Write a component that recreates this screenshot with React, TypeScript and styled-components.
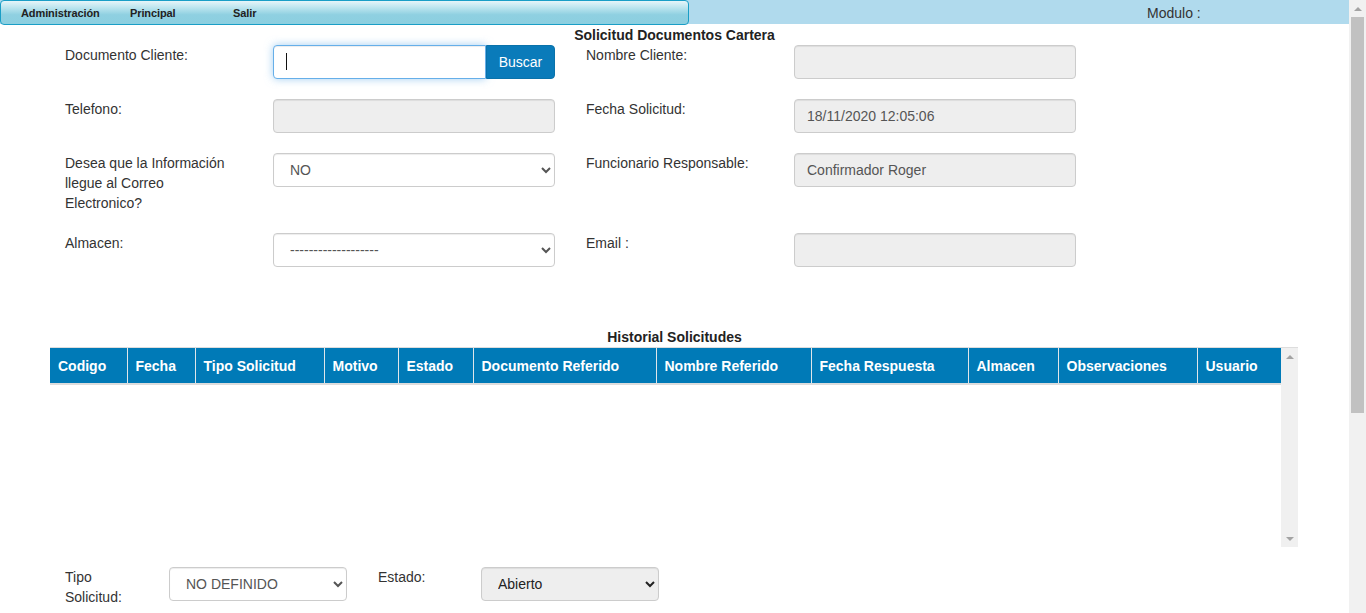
import React from "react";
import styled, { createGlobalStyle } from "styled-components";

const Global = createGlobalStyle`
  html, body { margin: 0; padding: 0; overflow: hidden; background: #fff; }
  body { font-family: "Liberation Sans", Arial, sans-serif; color: #333; }
  * { box-sizing: border-box; }
`;

const Shell = styled.div`
  display: flex;
  width: 100vw;
  height: 100vh;
  overflow: hidden;
`;

const Page = styled.div`
  flex: 1;
  min-width: 0;
  display: flex;
  flex-direction: column;
`;

const PageScroll = styled.div`
  width: 17px;
  height: 100%;
  background: #f1f1f1;
  display: flex;
  flex-direction: column;
  align-items: center;
`;

const ScrollArrow = styled.div<{ $down?: boolean }>`
  width: 17px;
  height: 17px;
  display: flex;
  align-items: center;
  justify-content: center;
  &::before {
    content: "";
    border-left: 4px solid transparent;
    border-right: 4px solid transparent;
    ${(p) => (p.$down ? "border-top: 4px solid #a3a3a3;" : "border-bottom: 4px solid #a3a3a3;")}
  }
`;

const Thumb = styled.div<{ $h: number }>`
  width: 13px;
  height: ${(p) => p.$h}px;
  background: #c1c1c1;
`;

const TopBar = styled.div`
  display: flex;
  align-items: flex-start;
  height: 24px;
  background: #b0daed;
`;

const MenuBox = styled.div`
  width: 689px;
  height: 25px;
  border: 1px solid #1a9ec6;
  border-radius: 4px;
  background: linear-gradient(to bottom, #e6f5f9 0%, #b3e1ec 35%, #8fd0e1 60%, #8ccfe0 100%);
  display: flex;
  align-items: center;
  padding-left: 20px;
`;

const MenuItem = styled.span<{ $w: number }>`
  width: ${(p) => p.$w}px;
  font-size: 11px;
  font-weight: bold;
  color: #222;
  line-height: 22px;
  letter-spacing: -0.1px;
`;

const Modulo = styled.span`
  margin-left: 458px;
  font-size: 14px;
  line-height: 26px;
  color: #333;
`;

const Heading = styled.div<{ $top: number }>`
  margin-top: ${(p) => p.$top}px;
  text-align: center;
  font-weight: bold;
  font-size: 14px;
  line-height: 16px;
  color: #222;
`;

const FormGrid = styled.div`
  margin-top: 2px;
  margin-left: 65px;
  display: grid;
  grid-template-columns: 208px 313px 208px 282px;
  row-gap: 20px;
  align-items: start;
`;

const Label = styled.div<{ $w?: number }>`
  font-size: 14px;
  line-height: 20px;
  color: #333;
  width: ${(p) => (p.$w ? `${p.$w}px` : "auto")};
`;

const InputGroup = styled.div`
  display: flex;
  position: relative;
  width: 282px;
  height: 34px;
`;

const FocusInput = styled.input`
  flex: 1;
  min-width: 0;
  height: 34px;
  border: 1px solid #66afe9;
  border-radius: 4px 0 0 4px;
  box-shadow: inset 0 1px 1px rgba(0, 0, 0, 0.075), 0 0 8px rgba(102, 175, 233, 0.6);
  padding: 6px 12px;
  font-family: inherit;
  font-size: 14px;
  color: #555;
  outline: none;
`;

const Caret = styled.span`
  position: absolute;
  left: 13px;
  top: 8px;
  width: 1px;
  height: 17px;
  background: #111;
`;

const SearchButton = styled.button`
  width: 69px;
  height: 34px;
  border: 1px solid #0a72aa;
  border-radius: 0 4px 4px 0;
  background: #0a7bba;
  color: #fff;
  font-family: inherit;
  font-size: 14px;
  padding: 0;
`;

const ReadField = styled.input`
  width: 282px;
  height: 34px;
  border: 1px solid #ccc;
  border-radius: 4px;
  background: #eee;
  padding: 6px 12px;
  font-family: inherit;
  font-size: 14px;
  color: #555;
  box-shadow: inset 0 1px 1px rgba(0, 0, 0, 0.075);
`;

const Select = styled.select<{ $w: number; $gray?: boolean }>`
  width: ${(p) => p.$w}px;
  height: 34px;
  border: 1px solid #ccc;
  border-radius: 4px;
  background-color: ${(p) => (p.$gray ? "#eee" : "#fff")};
  padding: 6px 12px;
  font-family: inherit;
  font-size: 14px;
  color: ${(p) => (p.$gray ? "#222" : "#555")};
  box-shadow: inset 0 1px 1px rgba(0, 0, 0, 0.075);
`;

const TableWrap = styled.div`
  margin: 2px 0 0 50px;
  width: 1248px;
  height: 200px;
  display: flex;
  border-top: 1px solid #ddd;
`;

const TableArea = styled.div`
  width: 1231px;
`;

const Table = styled.table`
  width: 1231px;
  border-collapse: collapse;
  table-layout: fixed;
`;

const Th = styled.th<{ $w: number }>`
  width: ${(p) => p.$w}px;
  height: 36px;
  background: #007ab7;
  color: #fff;
  font-size: 14px;
  font-weight: bold;
  text-align: left;
  padding: 0 8px;
  border-left: 1px solid #dfe6ea;
  border-bottom: 2px solid #ddd;
  white-space: nowrap;
  &:first-child { border-left: none; }
`;

const InnerScroll = styled.div`
  width: 17px;
  background: #f0f0f0;
  display: flex;
  flex-direction: column;
  justify-content: space-between;
`;

const BottomRow = styled.div`
  margin: 20px 0 0 65px;
  display: grid;
  grid-template-columns: 104px 209px 103px 178px;
  align-items: start;
`;

const cols: [string, number][] = [
  ["Codigo", 77],
  ["Fecha", 68],
  ["Tipo Solicitud", 129],
  ["Motivo", 74],
  ["Estado", 75],
  ["Documento Referido", 183],
  ["Nombre Referido", 155],
  ["Fecha Respuesta", 157],
  ["Almacen", 90],
  ["Observaciones", 139],
  ["Usuario", 84],
];

export default function App() {
  return (
    <>
      <Global />
      <Shell>
        <Page>
          <TopBar>
            <MenuBox>
              <MenuItem $w={109}>Administración</MenuItem>
              <MenuItem $w={103}>Principal</MenuItem>
              <MenuItem $w={60}>Salir</MenuItem>
            </MenuBox>
            <Modulo>Modulo :</Modulo>
          </TopBar>

          <Heading $top={3}>Solicitud Documentos Cartera</Heading>

          <FormGrid>
            <Label>Documento Cliente:</Label>
            <InputGroup>
              <FocusInput type="text" defaultValue="" />
              <Caret />
              <SearchButton type="button">Buscar</SearchButton>
            </InputGroup>
            <Label>Nombre Cliente:</Label>
            <ReadField readOnly defaultValue="" />

            <Label>Telefono:</Label>
            <ReadField readOnly defaultValue="" />
            <Label>Fecha Solicitud:</Label>
            <ReadField readOnly defaultValue="18/11/2020 12:05:06" />

            <Label $w={170}>Desea que la Información llegue al Correo Electronico?</Label>
            <Select $w={282} defaultValue="NO">
              <option value="NO">NO</option>
              <option value="SI">SI</option>
            </Select>
            <Label>Funcionario Responsable:</Label>
            <ReadField readOnly defaultValue="Confirmador Roger" />

            <Label>Almacen:</Label>
            <Select $w={282} defaultValue="-">
              <option value="-">-------------------</option>
            </Select>
            <Label>Email :</Label>
            <ReadField readOnly defaultValue="" />
          </FormGrid>

          <Heading $top={62}>Historial Solicitudes</Heading>

          <TableWrap>
            <TableArea>
              <Table>
                <thead>
                  <tr>
                    {cols.map(([name, w]) => (
                      <Th key={name} $w={w}>
                        {name}
                      </Th>
                    ))}
                  </tr>
                </thead>
                <tbody />
              </Table>
            </TableArea>
            <InnerScroll>
              <ScrollArrow />
              <ScrollArrow $down />
            </InnerScroll>
          </TableWrap>

          <BottomRow>
            <Label $w={80}>Tipo Solicitud:</Label>
            <Select $w={178} defaultValue="ND">
              <option value="ND">NO DEFINIDO</option>
            </Select>
            <Label>Estado:</Label>
            <Select $w={178} $gray defaultValue="A">
              <option value="A">Abierto</option>
              <option value="C">Cerrado</option>
            </Select>
          </BottomRow>
        </Page>
        <PageScroll>
          <ScrollArrow />
          <Thumb $h={396} />
        </PageScroll>
      </Shell>
    </>
  );
}
